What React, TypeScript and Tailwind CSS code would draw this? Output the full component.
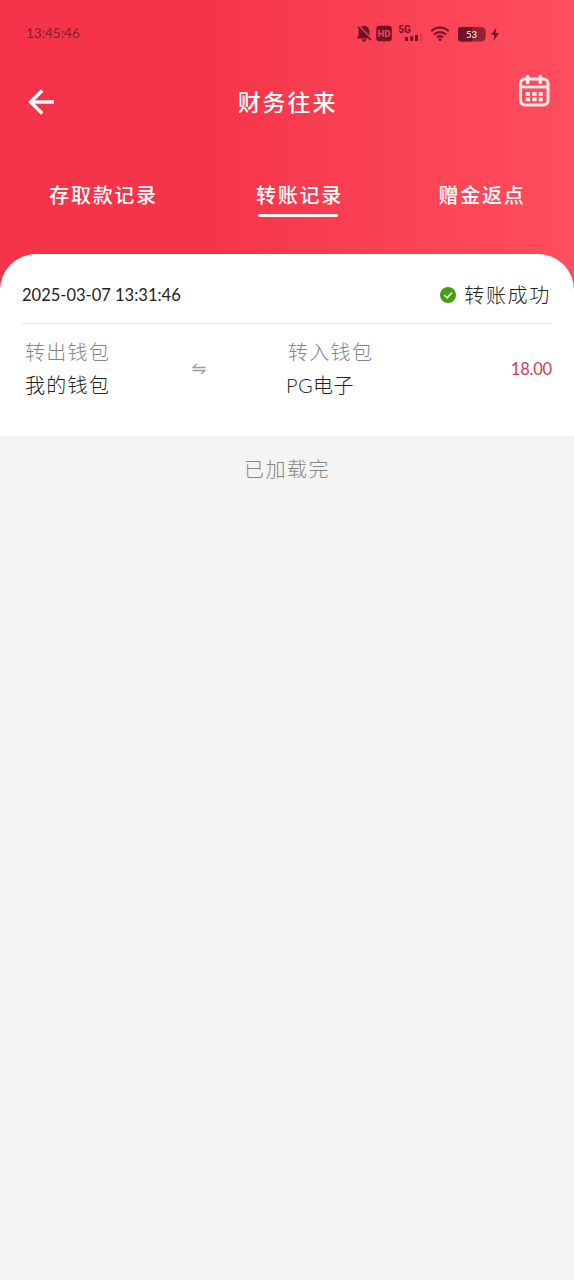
import { useState } from 'react'
import clsx from 'clsx'

interface TransferRecord {
  id: string
  time: string
  status: string
  from: string
  to: string
  amount: string
}

const tabs = [
  { key: 'deposit', label: '存取款记录', className: 'ml-[49px] w-[109px]' },
  { key: 'transfer', label: '转账记录', className: 'ml-[98px] w-[87px]' },
  { key: 'bonus', label: '赠金返点', className: 'ml-[95px] w-[88px]' },
]

const records: TransferRecord[] = [
  {
    id: '1',
    time: '2025-03-07 13:31:46',
    status: '转账成功',
    from: '我的钱包',
    to: 'PG电子',
    amount: '18.00',
  },
]

function StatusIcons() {
  return (
    <svg width="146" height="20" viewBox="356 24 146 20" fill="#6f1426">
      {/* Muted bell */}
      <path d="M364 25.800c-3.700.4-5.400 2.800-5.400 6v3.400l-1.800 3.400h14.400l-1.800-3.400v-3.400c0-3.200-1.700-5.600-5.400-6z M361.600 39.200h4.800c-.4 1.600-1.300 2.300-2.400 2.300s-2-.7-2.400-2.300z" />
      <path d="M359.500 26.300l13 13.500" stroke="#f93c4f" strokeWidth="1.500" />
      <path d="M357.800 26.700l13.200 13.600" stroke="#6f1426" strokeWidth="1.600" />
      {/* HD */}
      <rect x="376.200" y="25.800" width="15.600" height="15.400" rx="3" />
      <text x="384" y="37" textAnchor="middle" fontSize="9.500" fontWeight="700" fill="#fb4356" fontFamily="Roboto, sans-serif">
        HD
      </text>
      {/* Signal */}
      <text x="398.300" y="33" fontSize="10" fontWeight="700" fontFamily="Roboto, sans-serif">
        5G
      </text>
      <rect x="405" y="37" width="3" height="4" rx=".5" />
      <rect x="410.200" y="36.300" width="3" height="4.700" rx=".5" />
      <rect x="415" y="35" width="3" height="6" rx=".5" />
      <rect x="420" y="33" width="2.500" height="8" rx=".5" opacity=".18" />
      {/* Wifi */}
      <g fill="none" stroke="#6f1426" strokeWidth="2.200">
        <path d="M431.300 31.100c5-4.800 12.400-4.800 17.400 0" />
        <path d="M434.300 34.400c3.300-3 8.100-3 11.400 0" />
        <path d="M437 37.400c1.800-1.500 4.200-1.500 6 0" />
      </g>
      <circle cx="440" cy="39.600" r="1.500" />
      {/* Battery */}
      <path d="M461 27h20c3 0 4 1.500 4.600 3.500.3 2.500.3 5.500 0 7.500-.6 2-1.600 3.500-4.600 3.500h-20c-2 0-3-1-3-3v-8.500c0-2 1-3 3-3z" opacity=".72" />
      <path d="M461 27h11v14.500h-11c-2 0-3-1-3-3v-8.500c0-2 1-3 3-3z" />
      <text x="471.500" y="38" textAnchor="middle" fontSize="9.500" fontWeight="400" fill="#fff" fontFamily="Lato, sans-serif">
        53
      </text>
      <path d="M496.500 27.500l-5.500 7.500h3.500l-1 6 5.500-8h-3.500z" />
    </svg>
  )
}

function BackArrow() {
  return (
    <svg width="28" height="28" viewBox="0 0 28 28" fill="none" stroke="#fff" strokeWidth="3.400">
      <path d="M27 14H3.500" />
      <path d="M15.200 2.500L3.600 14l11.600 11.500" />
    </svg>
  )
}

function CalendarIcon() {
  return (
    <svg width="34" height="34" viewBox="0 0 34 34" fill="none" stroke="#ffeaec">
      <rect x="3.500" y="5" width="27.500" height="26" rx="4.500" strokeWidth="3" />
      <path d="M3.500 13H31" strokeWidth="2.800" />
      <path d="M10.700 2.500v6M23.300 2.500v6" strokeWidth="3.600" strokeLinecap="round" />
      <path d="M8.700 20h17M8.700 25.300h17" strokeWidth="3.800" strokeDasharray="4.400 2.100" />
    </svg>
  )
}

function SuccessIcon() {
  return (
    <svg width="16" height="16" viewBox="0 0 16 16">
      <circle cx="8" cy="8" r="8" fill="#479c12" />
      <path d="M4.200 8l2.900 2.800 5-5.200" fill="none" stroke="#eaffdc" strokeWidth="1.700" />
    </svg>
  )
}

function SwapIcon() {
  return (
    <svg width="14" height="12" viewBox="0 0 14 12" fill="none" stroke="#9b9b9b" strokeWidth="1.300">
      <path d="M13.500 4.500H1L5 1" />
      <path d="M.5 7.500H13L9 11" />
    </svg>
  )
}

function RecordItem({ record }: { record: TransferRecord }) {
  return (
    <div className="px-[22px]">
      <div className="flex h-[70px] items-center justify-between border-b border-[#ececec] pt-[13px]">
        <span className="whitespace-nowrap text-[16.5px] font-normal text-[#222]">{record.time}</span>
        <div className="flex items-center gap-2">
          <SuccessIcon />
          <span className="mr-px whitespace-nowrap text-[20px] tracking-[1.7px] text-[#222]">{record.status}</span>
        </div>
      </div>
      <div className="flex h-28 pt-3 text-[20px] leading-[33px] tracking-[1.3px]">
        <div className="w-[170px] pl-[3px]">
          <p className="text-[#858585]">转出钱包</p>
          <p className="text-[#222]">{record.from}</p>
        </div>
        <div className="w-[94px] pt-[27px]">
          <SwapIcon />
        </div>
        <div className="flex-1">
          <p className="pl-[2px] text-[#858585]">转入钱包</p>
          <p className="tracking-[0.4px] text-[#222]">{record.to}</p>
        </div>
        <span className="pt-[17px] text-[16.5px] font-normal tracking-[-0.2px] text-[#ce4052]">{record.amount}</span>
      </div>
    </div>
  )
}

export default function App() {
  const [activeTab, setActiveTab] = useState('transfer')

  return (
    <div className="min-h-screen w-full bg-[#f4f4f4] font-[Lato,'Noto_Sans_CJK_SC',sans-serif] font-light">
      <div className="bg-linear-to-r from-[#f53349] from-35% to-[#ff4e5e]">
        {/* Status bar */}
        <div className="flex h-[68px] items-center justify-between pl-[26px] pr-[72px]">
          <span className="mb-0.5 text-[13.5px] font-normal text-[#8c1c30]">13:45:46</span>
          <StatusIcons />
        </div>

        {/* Title bar */}
        <header className="grid h-[68px] grid-cols-[1fr_auto_1fr] items-center pl-[27px] pr-[23px] text-white">
          <button type="button" aria-label="返回" className="w-7">
            <BackArrow />
          </button>
          <h1 className="-ml-[3px] text-[23px] font-medium tracking-[1.9px]">财务往来</h1>
          <button type="button" aria-label="日期" className="mb-[23px] justify-self-end">
            <CalendarIcon />
          </button>
        </header>

        {/* Tabs */}
        <nav className="flex h-[118px] items-start pt-11 text-white">
          {tabs.map((tab) => (
            <button
              key={tab.key}
              type="button"
              onClick={() => setActiveTab(tab.key)}
              className={clsx('flex shrink-0 flex-col items-center', tab.className)}
            >
              <span className="whitespace-nowrap text-[20px] font-medium leading-[30px] tracking-[1.7px]">
                {tab.label}
              </span>
              {activeTab === tab.key && (
                <span className="mr-[3px] mt-1 h-[3px] w-20 rounded-xs bg-[#fff0f0]" />
              )}
            </button>
          ))}
        </nav>

        <main className="rounded-t-[36px] bg-white">
          {records.map((record) => (
            <RecordItem key={record.id} record={record} />
          ))}
        </main>
      </div>

      <p className="pt-[18px] text-center text-[20px] leading-[30px] tracking-[1.5px] text-[#858585]">已加载完</p>
    </div>
  )
}
